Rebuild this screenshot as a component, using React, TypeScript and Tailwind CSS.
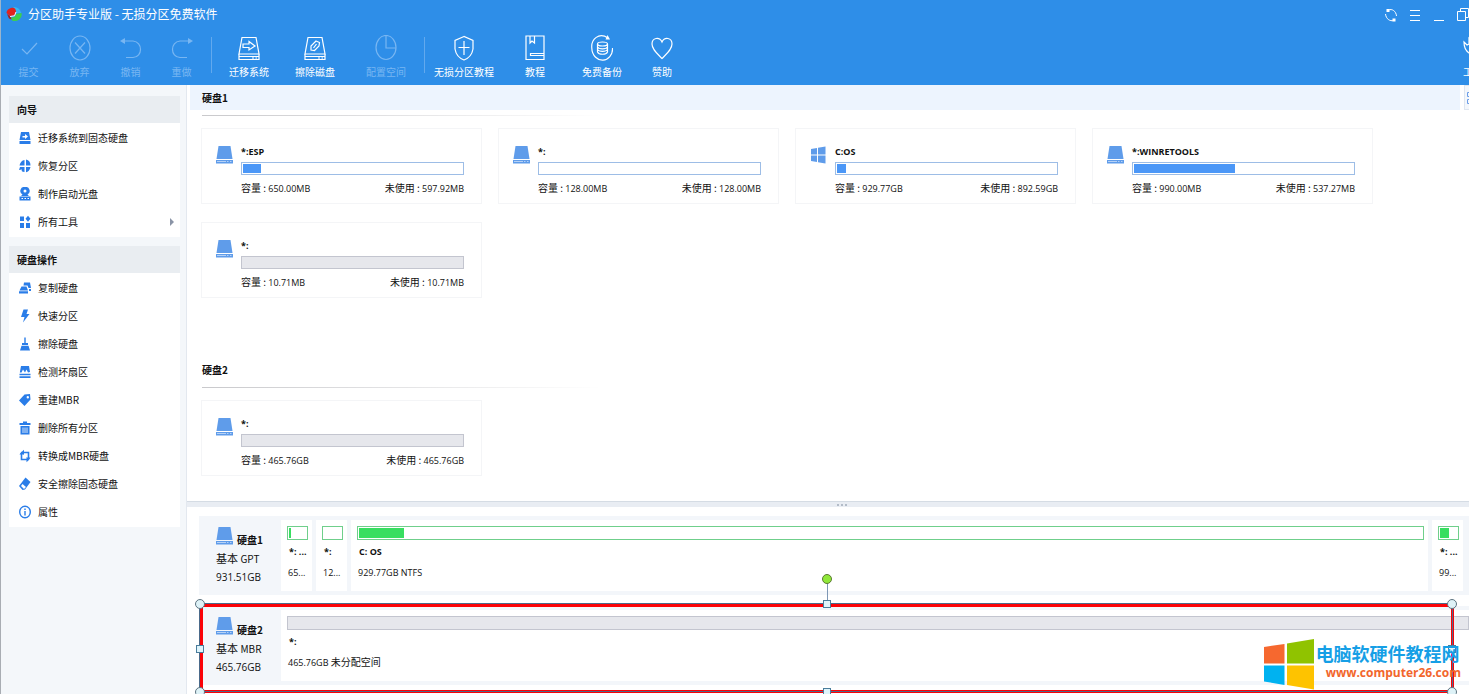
import type { ReactNode } from "react";

// ============================================
// TYPES
// ============================================

interface Tool {
  label: string;
  icon: ReactNode;
  width: string;
  disabled?: boolean;
}

interface MenuEntry {
  label: string;
  icon: ReactNode;
  hasSubmenu?: boolean;
}

interface Partition {
  name: string;
  size: string;
  free: string;
  used?: number;
  system?: boolean;
}

// ============================================
// ICONS
// ============================================

function ToolIcon({ children }: { children: ReactNode }) {
  return (
    <svg width="22" height="26" viewBox="0 0 22 26" fill="none" stroke="currentColor" strokeWidth="1.2" aria-hidden="true">
      {children}
    </svg>
  );
}

function MenuIcon({ children }: { children: ReactNode }) {
  return (
    <svg width="12" height="14" viewBox="0 0 12 14" fill="currentColor" className="shrink-0 text-[#2a7de8]" aria-hidden="true">
      {children}
    </svg>
  );
}

function DriveShape() {
  return (
    <>
      <path d="M4 2.500H18L21 19H1Z" />
      <path d="M1 19V24.500H21V19M1 21.500H21" />
      <path d="M14 23H16M17.500 23H19" />
    </>
  );
}

function DriveIcon() {
  return (
    <svg width="17" height="18" viewBox="0 0 17 18" className="shrink-0" aria-hidden="true">
      <path d="M2.500 0H14.500L16.500 13H.5Z" fill="#5f9cea" />
      <path d="M0 14H17V17.500H0Z" fill="#5f9cea" />
      <path d="M1 15.500H10M11 15.500H12.500M14 15.500H15.500" stroke="#b5d1f6" strokeWidth="1" />
    </svg>
  );
}

function WindowsIcon() {
  return (
    <svg width="17" height="18" viewBox="0 0 17 18" fill="#5f9cea" className="shrink-0" aria-hidden="true">
      <path d="M1 3L7 2V8.500H1ZM8 1.800L15.500.5V8.500H8ZM1 9.500H7V16L1 15ZM8 9.500H15.500V17.500L8 16.200Z" />
    </svg>
  );
}

function AppLogo() {
  return (
    <svg width="16" height="16" viewBox="0 0 16 16" className="shrink-0" aria-hidden="true">
      <path d="M7.500 1A7 7 0 0 1 15 7L8.500 7.500Z" fill="#35b8f2" />
      <path d="M15.500 7A7 6.500 0 0 1 6 14.500L5 11.500L8.500 11L10 8Z" fill="#3ccf4e" />
      <path d="M5 2C8 1 10 2.500 10 5.500L8.500 9.500L4 10L.5 7C.5 4.500 2.500 2.500 5 2Z" fill="#e0231f" />
      <path d="M1 8L4.500 10.500L5.500 13.500L3 12.500Z" fill="#a81f1c" />
      <path d="M4 10.500L8.500 9.800L10 6" stroke="#ffffff" strokeWidth="1" fill="none" />
    </svg>
  );
}

// ============================================
// DATA
// ============================================

const editTools: Tool[] = [
  {
    label: "提交",
    width: "w-[51px]",
    disabled: true,
    icon: <path d="M4 14L9 19L19 8" />,
  },
  {
    label: "放弃",
    width: "w-[51px]",
    disabled: true,
    icon: (
      <>
        <ellipse cx="11" cy="13" rx="10" ry="12" />
        <path d="M6 7.500L16 18.500M16 7.500L6 18.500" />
      </>
    ),
  },
  {
    label: "撤销",
    width: "w-[51px]",
    disabled: true,
    icon: (
      <>
        <path d="M2 6H13C23 7 23 22 13 22.500H6" />
        <path d="M5 3V9L0 6Z" fill="currentColor" stroke="none" />
      </>
    ),
  },
  {
    label: "重做",
    width: "w-[51px]",
    disabled: true,
    icon: (
      <>
        <path d="M20 6H9C-1 7-1 22 9 22.500H16" />
        <path d="M17 3V9L22 6Z" fill="currentColor" stroke="none" />
      </>
    ),
  },
];

const diskTools: Tool[] = [
  {
    label: "迁移系统",
    width: "w-[66px]",
    icon: (
      <>
        <DriveShape />
        <path d="M5 9H11V6.500L17 11L11 15V12.500H5Z" />
      </>
    ),
  },
  {
    label: "擦除磁盘",
    width: "w-[66px]",
    icon: (
      <>
        <DriveShape />
        <path d="M12 6L15.500 7.500L15 11L10.500 15.500L7 15L7 11Z" />
        <path d="M12.500 9L9.500 13" />
      </>
    ),
  },
  {
    label: "配置空间",
    width: "w-[76px]",
    disabled: true,
    icon: (
      <>
        <ellipse cx="11" cy="12.500" rx="10" ry="12" />
        <path d="M11 .5V13H21" />
      </>
    ),
  },
];

const helpTools: Tool[] = [
  {
    label: "无损分区教程",
    width: "w-[70px]",
    icon: (
      <>
        <path d="M11 1.500L2 5.500V14C3 20 7 23.500 11 25C15 23.500 19 20 20 14V5.500Z" />
        <path d="M11 6V20M5.500 12.500H16.500" />
      </>
    ),
  },
  {
    label: "教程",
    width: "w-[72px]",
    icon: (
      <>
        <path d="M2 1H20V24.500H2Z" />
        <path d="M6 1V8L8 6L10.500 8V1M20 18.500H6.500V20.500H20" />
      </>
    ),
  },
  {
    label: "免费备份",
    width: "w-[62px]",
    icon: (
      <>
        <path d="M17 3C8-3 0 4 .8 13C1 21 7 25.500 12 25.200C17 25 22 20 21.500 13" />
        <path d="M14.500 4.500L16.500 0L19 4.500Z" fill="currentColor" stroke="none" />
        <ellipse cx="11.500" cy="9" rx="5" ry="2" />
        <path d="M6.500 9V17C8 20 15 20 16.500 17V9M6.500 12C8 14.500 15 14.500 16.500 12M6.500 14.500C8 17 15 17 16.500 14.500" />
      </>
    ),
  },
  {
    label: "赞助",
    width: "w-[58px]",
    icon: <path d="M11 23.500C6 18.500 1 14.500 1 9C1 2.500 8.500 1.500 11 7C13.500 1.500 21 2.500 21 9C21 14.500 16 18.500 11 23.500Z" />,
  },
];

const wizardItems: MenuEntry[] = [
  {
    label: "迁移系统到固态硬盘",
    icon: (
      <>
        <path d="M2 1H10L11.500 9H.5ZM.5 10H11.500V13H.5Z" />
        <path d="M3.500 5H6V3L9 5.500L6 8V6.500H3.500Z" fill="#ffffff" />
      </>
    ),
  },
  {
    label: "恢复分区",
    icon: (
      <>
        <path d="M5.500 1V6.500H.5C1 3.500 3 1.200 5.500 1ZM7 .5C10 1 11.500 3.500 11.500 6.500H7ZM7 8H11.500C11 11 9 13 7 13.200Z" />
        <path d="M1 8L5.500 8V13C3 13 2 12 3 10.500L0 11Z" />
      </>
    ),
  },
  {
    label: "制作启动光盘",
    icon: (
      <>
        <path fillRule="evenodd" d="M6 0A4 4 0 0 1 8.500 7.500L10 9H2L3.500 7.500A4 4 0 0 1 6 0ZM6 2.500A1.500 1.500 0 1 0 6 5.500A1.500 1.500 0 1 0 6 2.500Z" />
        <path d="M.5 9.500H11.500V13.500H.5Z" />
        <path d="M2.500 11.500H4M5.500 11.500H7M8.500 11.500H10" stroke="#ffffff" />
      </>
    ),
  },
  {
    label: "所有工具",
    hasSubmenu: true,
    icon: <path d="M1 1.500H5V6H1ZM1 8H5V13H1ZM7 8H11V13H7ZM9 .8L11.500 3.800L9 6.800L6.500 3.800Z" />,
  },
];

const diskItems: MenuEntry[] = [
  {
    label: "复制硬盘",
    icon: <path d="M5 1.500H11L12 7H9.500L8.500 4.500H4.500ZM2.500 5.500H7.500L9 9.500H.5ZM0 10.300H9V12.500H0ZM10 8H12V10H10Z" />,
  },
  {
    label: "快速分区",
    icon: <path d="M4.500 .5H9L7.500 5H10.500L4 13.500L5.500 8H2Z" />,
  },
  {
    label: "擦除硬盘",
    icon: <path d="M5.300 .5H6.700V6H9V8H3V6H5.300ZM2.500 8.800H9.500L11 13.500H1Z" />,
  },
  {
    label: "检测坏扇区",
    icon: <path d="M2 1H10L11 7L9 7.500L7.500 4.500L6 7.500L4 4.500L2.500 7.500H.8ZM.5 8.800H11.500V10.200H.5ZM.5 11.200H11.500V13H.5Z" />,
  },
  {
    label: "重建MBR",
    icon: <path fillRule="evenodd" d="M5.500 1.500L11 1L11.500 6.500L5.500 13L0 7.500ZM8.800 3A1.200 1.200 0 1 0 8.800 5.400A1.200 1.200 0 1 0 8.800 3Z" />,
  },
  {
    label: "删除所有分区",
    icon: (
      <>
        <path d="M4 .5H8V2H11.500V4H.5V2H4ZM1.500 5H10.500V13.500H1.500Z" />
        <path d="M4 6.500V12M6 6.500V12M8 6.500V12" stroke="#ffffff" strokeWidth=".8" />
      </>
    ),
  },
  {
    label: "转换成MBR硬盘",
    icon: (
      <>
        <path d="M2.500 4V10.500H8M9.500 10V3.500H4" fill="none" stroke="currentColor" strokeWidth="1.600" />
        <path d="M5 .8V6L2 3.500ZM7.500 8V13.200L10.500 10.500ZM.5 5.500L2.500 2.500L4.500 5.500ZM7.500 8.500L9.500 11.500L11.500 8.500Z" />
      </>
    ),
  },
  {
    label: "安全擦除固态硬盘",
    icon: (
      <>
        <path d="M6.500 .5L11.500 5L6 12.500L3.500 13L0 9Z" />
        <path d="M3.500 7L7 10L5 12L2 9Z" fill="#ffffff" />
      </>
    ),
  },
  {
    label: "属性",
    icon: (
      <>
        <ellipse cx="6" cy="7" rx="5.300" ry="5.800" fill="none" stroke="currentColor" strokeWidth="1.400" />
        <path d="M5.300 3.500H6.700V5H5.300ZM5.300 6H6.700V10.500H5.300Z" />
      </>
    ),
  },
];

const disk1: Partition[] = [
  { name: "*:ESP", size: "650.00MB", free: "597.92MB", used: 8 },
  { name: "*:", size: "128.00MB", free: "128.00MB", used: 0 },
  { name: "C:OS", size: "929.77GB", free: "892.59GB", used: 4, system: true },
  { name: "*:WINRETOOLS", size: "990.00MB", free: "537.27MB", used: 46 },
  { name: "*:", size: "10.71MB", free: "10.71MB" },
];

const disk2: Partition[] = [{ name: "*:", size: "465.76GB", free: "465.76GB" }];

// ============================================
// TOP BARS
// ============================================

function TitleBar() {
  return (
    <div className="flex h-7 items-center pl-[5px]">
      <AppLogo />
      <h1 className="ml-1.5 pb-px text-[12px] leading-4">分区助手专业版 - 无损分区免费软件</h1>
      <div className="ml-auto flex gap-3 pt-0.5">
        <button type="button" aria-label="刷新">
          <svg width="12" height="14" viewBox="0 0 12 14" fill="none" stroke="currentColor">
            <path d="M3.500 2C7 .5 11 3 11.500 8M8.500 12.500C5 13.500 1 11 .5 6" />
            <path d="M1.500 1H4.500V4H1.500ZM7.500 10.500H10.500V13.500H7.500Z" fill="currentColor" stroke="none" />
          </svg>
        </button>
        <button type="button" aria-label="菜单">
          <svg width="12" height="14" viewBox="0 0 12 14" stroke="currentColor">
            <path d="M1 2.500H11M1 7.500H11M1 12.500H11" />
          </svg>
        </button>
        <button type="button" aria-label="最小化">
          <svg width="12" height="14" viewBox="0 0 12 14" stroke="currentColor">
            <path d="M1 12.500H11" />
          </svg>
        </button>
        <button type="button" aria-label="还原">
          <svg width="12" height="14" viewBox="0 0 12 14" fill="none" stroke="currentColor">
            <path d="M.5 3.500H8.500V12.500H.5ZM3.500 3.500V.5H11.500V9.500H8.500" />
          </svg>
        </button>
      </div>
    </div>
  );
}

function ToolGroup({ tools }: { tools: Tool[] }) {
  return (
    <div className="flex">
      {tools.map((tool) => (
        <button
          key={tool.label}
          type="button"
          disabled={tool.disabled}
          className={`${tool.width} flex shrink-0 flex-col items-center gap-[3px] whitespace-nowrap text-[10px] leading-4 ${
            tool.disabled ? "text-[#78b6f2]" : "text-white"
          }`}
        >
          <ToolIcon>{tool.icon}</ToolIcon>
          {tool.label}
        </button>
      ))}
    </div>
  );
}

function Toolbar() {
  return (
    <div className="flex h-[57px] overflow-hidden pl-0.5 pt-[7px]">
      <ToolGroup tools={editTools} />
      <span className="mx-1 mt-0.5 h-9 w-px bg-[#62a9ee]" />
      <ToolGroup tools={diskTools} />
      <span className="mr-1 mt-0.5 h-9 w-px bg-[#62a9ee]" />
      <ToolGroup tools={helpTools} />
      <button type="button" className="-mr-4 ml-auto flex shrink-0 flex-col items-start gap-[3px] whitespace-nowrap text-[10px] leading-4">
        <ToolIcon>
          <path d="M1 7C1 13 3 17 8 19L17 24L20 20L11 12L10 6L6 3V9L4 10Z" />
        </ToolIcon>
        工具
      </button>
    </div>
  );
}

// ============================================
// SIDEBAR
// ============================================

function MenuPanel({ title, items }: { title: string; items: MenuEntry[] }) {
  return (
    <section className="bg-white">
      <h2 className="h-[27px] bg-[#e9edf1] pl-2 text-[10px] font-bold leading-[27px]">{title}</h2>
      <ul className="py-px">
        {items.map((item) => (
          <li key={item.label}>
            <button type="button" className="flex h-7 w-full items-center gap-[7px] pl-2.5 pr-1.5 text-[10px] leading-4">
              <MenuIcon>{item.icon}</MenuIcon>
              <span>{item.label}</span>
              {item.hasSubmenu && (
                <svg width="4" height="8" viewBox="0 0 4 8" className="ml-auto" fill="#8a94a6" aria-hidden="true">
                  <path d="M0 0L4 4L0 8Z" />
                </svg>
              )}
            </button>
          </li>
        ))}
      </ul>
    </section>
  );
}

// ============================================
// PARTITION CARDS
// ============================================

// Sizes and volume names use the narrower latin face
const latin = "font-['Open_Sans','Noto_Sans_CJK_SC',sans-serif] text-[9px]";

function PartitionCard({ part }: { part: Partition }) {
  const unallocated = part.used === undefined;
  return (
    <article className="flex h-[76px] gap-2 border border-[#f4f5f7] px-[14px] pt-[15px]">
      <div className="pt-0.5">{part.system ? <WindowsIcon /> : <DriveIcon />}</div>
      <div className="w-[223px] text-[10px]">
        <h3 className={`${latin} h-[18px] font-bold leading-4`}>{part.name}</h3>
        <div className={`h-[13px] border p-px ${unallocated ? "border-[#c3c5cf] bg-[#e6e7ec]" : "border-[#9dbde6] bg-white"}`}>
          {!unallocated && <div className="h-full bg-[#4b97f7]" style={{ width: `${part.used}%` }} />}
        </div>
        <div className="flex justify-between pt-[5px] leading-4">
          <span>
            容量 : <span className={latin}>{part.size}</span>
          </span>
          <span>
            未使用 : <span className={latin}>{part.free}</span>
          </span>
        </div>
      </div>
    </article>
  );
}

function DiskSection({ title, parts, active }: { title: string; parts: Partition[]; active?: boolean }) {
  return (
    <section>
      <div className="flex gap-1">
        <h2 className={`h-[25px] grow pl-3 text-[10px] font-bold leading-[25px] ${active ? "bg-[#edf4fe]" : ""}`}>{title}</h2>
        {active && (
          <button type="button" aria-label="视图" className="-mr-6 h-[25px] w-6 shrink-0 border border-[#dfe6f0] bg-[#f4f7fb] pl-0.5">
            <svg width="14" height="14" viewBox="0 0 14 14" fill="none" stroke="#6d9ee8" aria-hidden="true">
              <path d="M.5 1.500H4.500V5.500H.5ZM.5 8.500H4.500V12.500H.5ZM7 3.500H14M7 10.500H14" />
            </svg>
          </button>
        )}
      </div>
      <div className="ml-3 mt-[5px] h-px max-w-[400px] bg-gradient-to-r from-[#c9c9cc] to-white" />
      <div className="ml-[11px] mt-3 grid grid-cols-[repeat(auto-fill,281px)] gap-x-4 gap-y-[18px]">
        {parts.map((part, i) => (
          <PartitionCard key={i} part={part} />
        ))}
      </div>
    </section>
  );
}

// ============================================
// DISK MAP
// ============================================

function DiskInfo({ name, type, size }: { name: string; type: string; size: string }) {
  return (
    <div className="w-[82px] shrink-0 pl-[17px] pt-[11px] text-[11px] leading-[18px]">
      <div className="flex h-[22px] gap-1">
        <DriveIcon />
        <h3 className="pt-1 text-[10px] font-bold">{name}</h3>
      </div>
      <p>
        基本 <span className="text-[10px]">{type}</span>
      </p>
      <p className="font-['Open_Sans',sans-serif] text-[10px]">{size}</p>
    </div>
  );
}

function MapCell({ name, info, note, used, grow }: { name: string; info: string; note?: string; used?: number; grow?: boolean }) {
  const unallocated = used === undefined;
  return (
    <div className={`h-[71px] bg-white text-[10px] leading-5 ${grow ? "grow" : "w-[31px] shrink-0"} ${unallocated ? "pl-1.5" : "pl-1.5 pr-1"} pt-1.5`}>
      <div className={`h-[14px] border p-px ${unallocated ? "border-[#c3c5cf] bg-[#e6e7ec]" : "border-[#6fcf8b]"}`}>
        {!unallocated && <div className="h-full bg-[#38de60]" style={{ width: `${used}%` }} />}
      </div>
      <p className={`${latin} whitespace-nowrap pl-0.5 pt-0.5 font-bold`}>{name}</p>
      <p className="whitespace-nowrap pl-px">
        <span className={latin}>{info}</span>
        {note && ` ${note}`}
      </p>
    </div>
  );
}

const knob = "absolute size-[10px] rounded-full border border-[#5d7380] bg-[#def2f7]";
const grip = "absolute size-2 border border-[#4a7d9c] bg-[#dff4fb]";
const core = "absolute bg-[#4b6a8a]";

function SelectionFrame() {
  return (
    <div className="pointer-events-none absolute -bottom-2 -top-0.5 left-px right-[15px] border-[3px] border-[#fb0207]">
      <span className={`${core} -left-1 -right-0.5 -top-1 h-px`} />
      <span className={`${core} -bottom-1 -left-1 -top-1 w-px left-auto right-full mr-[3px]`} />
      <span className={`${core} -bottom-0.5 -left-1 -right-0.5 h-px`} />
      <span className={`${core} -bottom-0.5 -right-0.5 -top-1 w-px`} />
      <span className="absolute -top-[26px] left-1/2 h-[22px] w-px bg-[#7d97b5]" />
      <span className="absolute -top-[33px] left-1/2 size-[10px] -translate-x-1/2 rounded-full border border-[#5c7a33] bg-[#90e83a]" />
      <span className={`${knob} -left-2 -top-2`} />
      <span className={`${knob} -right-[6px] -top-2`} />
      <span className={`${knob} -bottom-[7px] -left-2`} />
      <span className={`${knob} -bottom-[7px] -right-[6px]`} />
      <span className={`${grip} -top-[7px] left-1/2 -translate-x-1/2`} />
      <span className={`${grip} -bottom-1.5 left-1/2 -translate-x-1/2`} />
      <span className={`${grip} -left-[7px] top-1/2 -translate-y-1/2`} />
      <span className={`${grip} -right-[5px] top-1/2 -translate-y-1/2`} />
    </div>
  );
}

function SiteBadge() {
  return (
    <div className="absolute bottom-1 right-[10px] flex items-center gap-1">
      <svg width="50" height="52" viewBox="0 0 50 52" aria-hidden="true">
        <path d="M0 9L20.500 6V25.500H0Z" fill="#f6682f" />
        <path d="M23 5.500L50 1V25.500H23Z" fill="#90c300" />
        <path d="M0 27.500H20.500V47L0 43.500Z" fill="#00b2f0" />
        <path d="M23 27.500H50V51.500L23 47Z" fill="#fec300" />
      </svg>
      <div className="-ml-0.5 -mr-0.5 whitespace-nowrap pb-1.5 font-bold">
        <p className="text-[18px] leading-6 text-[#169fe6]">电脑软硬件教程网</p>
        <a href="#" className="block pl-2.5 font-['Open_Sans',sans-serif] text-[12px] leading-4 text-[#f2662c]">
          www.computer26.com
        </a>
      </div>
    </div>
  );
}

function DiskMap() {
  return (
    <div className="relative flex shrink-0 flex-col gap-[11px] pb-[9px] pl-3 pt-[9px]">
      <div className="flex h-[79px] gap-1 bg-[#f3f6fa] py-1 pr-1.5">
        <div className="-my-1 -mr-1">
          <DiskInfo name="硬盘1" type="GPT" size="931.51GB" />
        </div>
        <MapCell name="*: ..." info="65..." used={14} />
        <MapCell name="*:" info="12..." used={0} />
        <MapCell name="C: OS" info="929.77GB NTFS" used={4.2} grow />
        <MapCell name="*: ..." info="99..." used={50} />
      </div>
      <div className="relative flex h-[79px] bg-[#f3f6fa] py-1">
        <div className="-my-1">
          <DiskInfo name="硬盘2" type="MBR" size="465.76GB" />
        </div>
        <MapCell name="*:" info="465.76GB" note="未分配空间" grow />
        <SelectionFrame />
      </div>
      <SiteBadge />
    </div>
  );
}

// ============================================
// APP
// ============================================

export default function App() {
  return (
    <div className="flex h-screen flex-col overflow-hidden bg-white font-['Noto_Sans_CJK_SC',sans-serif] text-[#111111]">
      <header className="shrink-0 border-l border-[#9ab4cc] bg-[#2e8ee8] text-white">
        <TitleBar />
        <Toolbar />
      </header>

      <div className="flex min-h-0 grow">
        <aside className="w-[187px] shrink-0 space-y-[9px] border-l border-r border-l-[#a9adb3] border-r-[#e3e8ef] bg-[#f4f7fa] pl-2 pr-1.5 pt-[11px]">
          <MenuPanel title="向导" items={wizardItems} />
          <MenuPanel title="硬盘操作" items={diskItems} />
        </aside>

        <main className="flex min-w-0 grow flex-col">
          <div className="min-h-0 grow space-y-[59px] overflow-hidden pl-[3px] pr-[5px]">
            <DiskSection title="硬盘1" parts={disk1} active />
            <DiskSection title="硬盘2" parts={disk2} />
          </div>
          <div className="flex h-1.5 shrink-0 items-center justify-center gap-0.5 border-t border-[#d5dce4] bg-[#e9edf3] pl-7">
            <span className="size-0.5 bg-[#b3bcc8]" />
            <span className="size-0.5 bg-[#b3bcc8]" />
            <span className="size-0.5 bg-[#b3bcc8]" />
          </div>
          <DiskMap />
        </main>
      </div>
    </div>
  );
}
